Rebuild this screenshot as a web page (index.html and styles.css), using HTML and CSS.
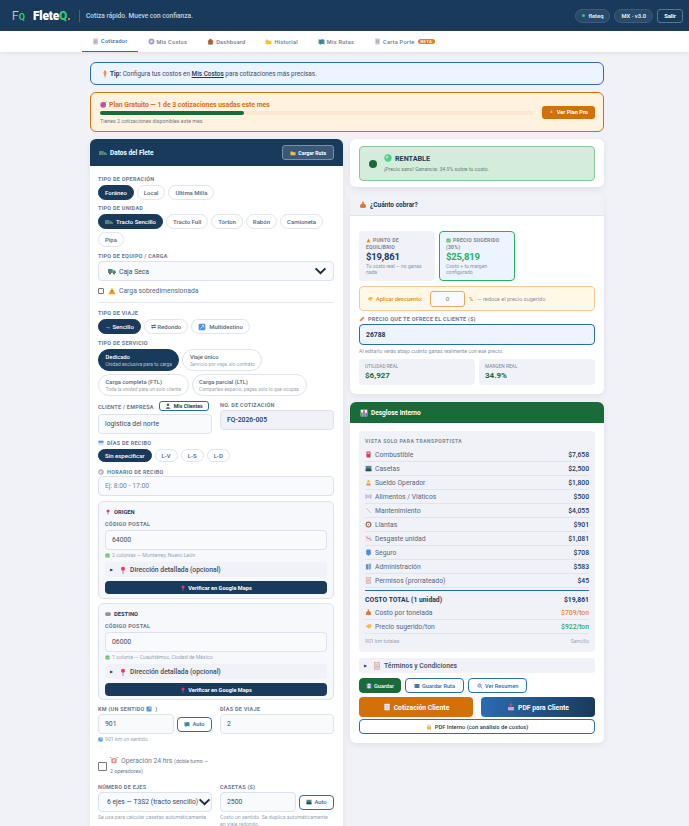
FILE: index.html
```html
<!DOCTYPE html>
<html lang="es">
<head>
  <meta charset="UTF-8" />
  <meta name="viewport" content="width=device-width, initial-scale=1.0" />
  <title>FleteQ</title>
  <link rel="stylesheet" href="styles.css">
</head>
<body>
  <svg class="sprite" xmlns="http://www.w3.org/2000/svg">
    <symbol id="truck" viewBox="0 0 12 12"><rect x="0" y="3" width="7" height="6" fill="#5f7f86"/><path d="M7 5h3l2 2v2H7z" fill="#3c9a6c"/><circle cx="3" cy="10" r="1.2" fill="#333"/><circle cx="9" cy="10" r="1.2" fill="#333"/></symbol>
    <symbol id="doc" viewBox="0 0 12 12"><rect x="2" y="1" width="8" height="10" rx="1" fill="#d8c8d8"/><path d="M3.5 4h5M3.5 6h5M3.5 8h5" stroke="#a28aa0" stroke-width=".8"/></symbol>
    <symbol id="coin" viewBox="0 0 12 12"><circle cx="6" cy="6" r="5" fill="#a49ac8"/><circle cx="6" cy="6" r="2.2" fill="#e6e2f2"/></symbol>
    <symbol id="house" viewBox="0 0 12 12"><path d="M6 1l5.5 5H10v5H2V6H.5z" fill="#b5563a"/><rect x="5" y="7" width="2.4" height="4" fill="#5d8a5a"/></symbol>
    <symbol id="folder" viewBox="0 0 12 12"><path d="M1 3h4l1 1.500h5V10.500H1z" fill="#f4c040"/></symbol>
    <symbol id="map" viewBox="0 0 12 12"><path d="M1 2l3.300 1 3.400-1L11 3v8l-3.300-1-3.400 1L1 10z" fill="#3f93a8"/><path d="M4.300 3v8M7.700 2v8" stroke="#2a6a72" stroke-width=".7"/></symbol>
    <symbol id="pin" viewBox="0 0 12 12"><circle cx="6" cy="4" r="3" fill="#e8386a"/><path d="M6 6v6" stroke="#9a7080" stroke-width="1.2"/></symbol>
    <symbol id="tip" viewBox="0 0 12 12"><path d="M6 0c2 2 2.500 3 2 5L6 12 4 5c-.5-2 0-3 2-5z" fill="#f08a4a"/><path d="M3 5h6" stroke="#f6b48a"/></symbol>
    <symbol id="target" viewBox="0 0 12 12"><circle cx="5.500" cy="6.500" r="5" fill="#d84f8a"/><circle cx="5.500" cy="6.500" r="2.4" fill="#9a5fc0"/><path d="M6 6l5-5" stroke="#3d7ac8" stroke-width="1.4"/></symbol>
    <symbol id="rocket" viewBox="0 0 12 12"><path d="M6 0c2 2 2.500 5 1.500 8h-3C3.500 5 4 2 6 0z" fill="#f6b6a0"/><path d="M4.500 8h3L6 12z" fill="#e5443a"/></symbol>
    <symbol id="warn" viewBox="0 0 12 12"><path d="M6 1l5.500 10H.5z" fill="#f4a41e"/><path d="M6 4.500v3.500" stroke="#6a4a10"/></symbol>
    <symbol id="cal" viewBox="0 0 12 12"><rect x="1" y="1.500" width="10" height="9.5" fill="#d8def8"/><rect x="1" y="1.500" width="10" height="4" fill="#5a8fdc"/></symbol>
    <symbol id="clock" viewBox="0 0 12 12"><circle cx="6" cy="6" r="4.5" fill="#fff" stroke="#75657a" stroke-width="1.5"/><path d="M6 3.500V6l2 1.500" stroke="#75657a" fill="none"/></symbol>
    <symbol id="user" viewBox="0 0 12 12"><circle cx="6" cy="3.500" r="2.5" fill="#5b3e80"/><path d="M1.500 11.500c0-4 9-4 9 0z" fill="#5b3e80"/></symbol>
    <symbol id="flag" viewBox="0 0 12 12"><rect x="1" y="3" width="10" height="6.5" fill="#6a6a7a"/><path d="M1 3l10 6.500M11 3L1 9.500" stroke="#d8d8de" stroke-width=".9"/></symbol>
    <symbol id="check" viewBox="0 0 12 12"><rect x="1" y="1" width="10" height="10" rx="1.5" fill="#62c06c"/><path d="M3 6l2.200 2.500L9 3.500" stroke="#e8f8e8" fill="none" stroke-width="1.2"/></symbol>
    <symbol id="arrow" viewBox="0 0 12 12"><rect x="1" y="1" width="10" height="10" rx="1.5" fill="#4a92e6"/><path d="M3.500 8.500l5-5M5.500 3.500h3v3" stroke="#fff" fill="none"/></symbol>
    <symbol id="alarm" viewBox="0 0 12 12"><rect x="2" y="3.500" width="8" height="7.5" rx="1.5" fill="#ec8a8a"/><path d="M2 3L0.500 1.500M10 3l1.500-1.500" stroke="#e0555a" stroke-width="1.5"/><circle cx="6" cy="7" r="2" fill="#fbe0e0"/></symbol>
    <symbol id="toll" viewBox="0 0 12 12"><rect x="1" y="1.500" width="10" height="9" fill="#4f8d9c"/><path d="M1 8l3-3 2 2 2-2 3 3v2.500H1z" fill="#30524a"/></symbol>
    <symbol id="bag" viewBox="0 0 12 12"><path d="M4.500 1h3L7 3.500c2.500 1 4 3.500 3.500 5.500-.5 2-8.500 2-9 0C1 7 2.500 4.500 5 3.500z" fill="#d87a38"/></symbol>
    <symbol id="pen" viewBox="0 0 12 12"><path d="M1 11l1-3.500L8.500 1 11 3.500 4.500 10z" fill="#ee7a52"/><path d="M8 2l2.500 2.500" stroke="#f4c4a8"/></symbol>
    <symbol id="bars" viewBox="0 0 12 12"><rect x="1" y="1" width="10" height="10" fill="#eef0ee"/><rect x="1.500" y="5" width="2.5" height="6" fill="#4ab06a"/><rect x="4.700" y="2" width="2.5" height="9" fill="#d04a88"/><rect x="8" y="6" width="2.5" height="5" fill="#4a80d8"/></symbol>
    <symbol id="fuel" viewBox="0 0 12 12"><rect x="2.500" y="1" width="7" height="10" rx="1" fill="#d83a52"/><rect x="4" y="2.500" width="4" height="2.5" fill="#f6c8d0"/></symbol>
    <symbol id="worker" viewBox="0 0 12 12"><path d="M4.500 1.500h3l1 5h-5z" fill="#f4bf4c"/><path d="M2.500 11V7.500h7V11z" fill="#f08a3a"/></symbol>
    <symbol id="food" viewBox="0 0 12 12"><rect x="1" y="2" width="1.8" height="8" fill="#b4a2d4"/><rect x="9.200" y="2" width="1.8" height="8" fill="#b4a2d4"/><rect x="3.600" y="3.500" width="4.8" height="5" fill="#ccc0e4"/></symbol>
    <symbol id="wrench" viewBox="0 0 12 12"><path d="M2 2l8 8" stroke="#b4b8c4" stroke-width="1.4"/></symbol>
    <symbol id="tire" viewBox="0 0 12 12"><circle cx="6" cy="6" r="4" fill="none" stroke="#a0705a" stroke-width="2.2"/><circle cx="6" cy="6" r="1" fill="#a0705a"/></symbol>
    <symbol id="down" viewBox="0 0 12 12"><rect x="1" y="1" width="10" height="10" fill="#ece4ec"/><path d="M1.500 3L6 6l2 0 3 4" stroke="#d8487a" fill="none" stroke-width="1.2"/></symbol>
    <symbol id="shield" viewBox="0 0 12 12"><path d="M3 1h6l1 2v6l-4 2.500L2 9V3z" fill="#4f8fdc"/></symbol>
    <symbol id="build" viewBox="0 0 12 12"><rect x="1.500" y="2" width="4.5" height="9" fill="#6a90b8"/><rect x="6.500" y="1" width="4" height="10" fill="#8aaad0"/></symbol>
    <symbol id="list" viewBox="0 0 12 12"><rect x="2" y="1" width="8" height="10" fill="#f0d8d8" stroke="#c89a9a" stroke-width=".8"/><path d="M3.500 4.500h5M3.500 6.500h5M3.500 8.500h5" stroke="#b8a0a0" stroke-width=".7"/></symbol>
    <symbol id="tag" viewBox="0 0 12 12"><path d="M1 6l5-4h5v4l-4 4z" fill="#f6b84a"/></symbol>
    <symbol id="save" viewBox="0 0 12 12"><rect x="1.500" y="1.500" width="9" height="9" fill="#a88ad8"/><rect x="3.500" y="1.500" width="5" height="3" fill="#f4eefc"/><rect x="3.500" y="6.500" width="5" height="4" fill="#e8e0f8"/></symbol>
    <symbol id="mapblue" viewBox="0 0 12 12"><rect x="1" y="2" width="10" height="8" fill="#4f83b8"/><path d="M4.300 2v8M7.700 2v8" stroke="#234f80" stroke-width=".8"/></symbol>
    <symbol id="search" viewBox="0 0 12 12"><circle cx="5" cy="5" r="3.3" fill="#bcd4f0" stroke="#7a5a9a" stroke-width="1.2"/><path d="M7.500 7.500l3.500 3.500" stroke="#8a6a3a" stroke-width="1.5"/></symbol>
    <symbol id="page" viewBox="0 0 12 12"><rect x="2" y="1" width="8" height="10" rx="1" fill="#f0e8ee"/><path d="M3.500 4h5M3.500 6h5M3.500 8h5" stroke="#c8b0c4" stroke-width=".8"/></symbol>
    <symbol id="outbox" viewBox="0 0 12 12"><rect x="1.500" y="6" width="9" height="5" fill="#c8a8d8"/><path d="M6 1v6" stroke="#e85070" stroke-width="1.5"/><path d="M3.500 3.500L6 1l2.500 2.500" stroke="#e85070" fill="none"/></symbol>
    <symbol id="lock" viewBox="0 0 12 12"><rect x="2" y="5" width="8" height="6" rx="1" fill="#f0b83a"/><path d="M3.800 5V3.500a2.200 2.200 0 0 1 4.400 0V5" stroke="#a8a0a0" fill="none" stroke-width="1.1"/></symbol>
    <symbol id="ball" viewBox="0 0 12 12"><circle cx="6" cy="6" r="5.5" fill="#52cf8c"/><circle cx="4.500" cy="4.500" r="2" fill="#a4ecc4"/></symbol>
    <symbol id="chev" viewBox="0 0 14 9"><path d="M1.500 1.500L7 7l5.500-5.500" fill="none" stroke="#1a2a3a" stroke-width="2.2"/></symbol>
  </svg>

  <header class="topbar">
    <div class="brand">
      <span class="logo-mark">F<b>Q</b></span>
      <span class="logo-text">Flete<b>Q</b><i></i></span>
      <span class="tagline">Cotiza rápido. Mueve con confianza.</span>
    </div>
    <div class="top-right">
      <span class="pill"><i class="online"></i>fleteq</span>
      <span class="pill">MX · v3.0</span>
      <button class="logout">Salir</button>
    </div>
  </header>

  <nav class="tabs">
    <a class="tab active"><svg class="ic"><use href="#doc"/></svg>Cotizador</a>
    <a class="tab"><svg class="ic"><use href="#coin"/></svg>Mis Costos</a>
    <a class="tab"><svg class="ic"><use href="#house"/></svg>Dashboard</a>
    <a class="tab"><svg class="ic"><use href="#folder"/></svg>Historial</a>
    <a class="tab"><svg class="ic"><use href="#map"/></svg>Mis Rutas</a>
    <a class="tab"><svg class="ic"><use href="#doc"/></svg>Carta Porte <span class="beta">BETA</span></a>
  </nav>

  <main class="wrap">
    <div class="tip"><svg class="ic"><use href="#tip"/></svg><span><b>Tip:</b> Configura tus costos en <a>Mis Costos</a> para cotizaciones más precisas.</span></div>

    <div class="plan">
      <div class="plan-info">
        <div class="plan-title"><svg class="ic"><use href="#target"/></svg>Plan Gratuito — 1 de 3 cotizaciones usadas este mes</div>
        <div class="meter"><div class="meter-fill"></div></div>
        <div class="plan-note">Tienes 2 cotizaciones disponibles este mes.</div>
      </div>
      <button class="btn-pro"><svg class="ic"><use href="#rocket"/></svg>Ver Plan Pro</button>
    </div>

    <div class="columns">
      <section class="card left">
        <div class="card-head navy">
          <span class="head-title"><svg class="ic"><use href="#truck"/></svg>Datos del Flete</span>
          <button class="btn-head"><svg class="ic"><use href="#folder"/></svg>Cargar Ruta</button>
        </div>
        <div class="card-body">
          <div class="lbl">Tipo de operación</div>
          <div class="chips tight">
            <span class="chip on">Foráneo</span><span class="chip">Local</span><span class="chip">Última Milla</span>
          </div>
          <div class="lbl">Tipo de unidad</div>
          <div class="chips">
            <span class="chip on"><svg class="ic"><use href="#truck"/></svg>Tracto Sencillo</span><span class="chip">Tracto Full</span><span class="chip">Tórton</span><span class="chip">Rabón</span><span class="chip">Camioneta</span><span class="chip">Pipa</span>
          </div>
          <div class="lbl">Tipo de equipo / carga</div>
          <div class="field select select-wide"><span><svg class="ic"><use href="#truck"/></svg>Caja Seca</span><svg class="chev"><use href="#chev"/></svg></div>
          <label class="check-row"><span class="box"></span><svg class="ic"><use href="#warn"/></svg>Carga sobredimensionada</label>
          <hr class="sep">

          <div class="lbl">Tipo de viaje</div>
          <div class="chips">
            <span class="chip on">→ Sencillo</span><span class="chip">⇄ Redondo</span><span class="chip"><svg class="ic"><use href="#arrow"/></svg>Multidestino</span>
          </div>
          <div class="lbl">Tipo de servicio</div>
          <div class="chips services">
            <span class="svc on"><b>Dedicado</b><small>Unidad exclusiva para tu carga</small></span>
            <span class="svc"><b>Viaje único</b><small>Servicio por viaje, sin contrato</small></span>
            <span class="svc"><b>Carga completa (FTL)</b><small>Toda la unidad para un solo cliente</small></span>
            <span class="svc"><b>Carga parcial (LTL)</b><small>Compartes espacio, pagas solo lo que ocupas</small></span>
          </div>
          <div class="two client-row">
            <div>
              <div class="lbl-row"><span class="lbl">Cliente / Empresa</span><button class="btn-mini"><svg class="ic"><use href="#user"/></svg>Mis Clientes</button></div>
              <div class="field">logistica del norte</div>
            </div>
            <div>
              <div class="lbl">No. de cotización</div>
              <div class="field readonly">FQ-2026-005</div>
            </div>
          </div>
          <div class="lbl"><svg class="ic"><use href="#cal"/></svg>Días de recibo</div>
          <div class="chips small-chips">
            <span class="chip on">Sin especificar</span><span class="chip">L-V</span><span class="chip">L-S</span><span class="chip">L-D</span>
          </div>
          <div class="lbl"><svg class="ic"><use href="#clock"/></svg>Horario de recibo</div>
          <div class="field muted">Ej: 8:00 - 17:00</div>

          <div class="place">
            <div class="place-title"><svg class="ic"><use href="#pin"/></svg>Origen</div>
            <div class="lbl">Código postal</div>
            <div class="field">64000</div>
            <div class="hint"><svg class="ic"><use href="#check"/></svg>2 colonias — Monterrey, Nuevo León</div>
            <div class="more"><span class="caret">▶</span><svg class="ic"><use href="#pin"/></svg>Dirección detallada (opcional)</div>
            <button class="btn-maps"><svg class="ic"><use href="#pin"/></svg>Verificar en Google Maps</button>
          </div>
          <div class="place">
            <div class="place-title"><svg class="ic"><use href="#flag"/></svg>Destino</div>
            <div class="lbl">Código postal</div>
            <div class="field">06000</div>
            <div class="hint"><svg class="ic"><use href="#check"/></svg>1 colonia — Cuauhtémoc, Ciudad de México</div>
            <div class="more"><span class="caret">▶</span><svg class="ic"><use href="#pin"/></svg>Dirección detallada (opcional)</div>
            <button class="btn-maps"><svg class="ic"><use href="#pin"/></svg>Verificar en Google Maps</button>
          </div>

          <div class="two km-row">
            <div>
              <div class="lbl">KM (un sentido <svg class="ic"><use href="#arrow"/></svg>)</div>
              <div class="with-btn">
                <div class="field">901</div>
                <button class="btn-auto"><svg class="ic"><use href="#map"/></svg>Auto</button>
              </div>
              <div class="hint"><svg class="ic"><use href="#arrow"/></svg>901 km un sentido</div>
            </div>
            <div>
              <div class="lbl">Días de viaje</div>
              <div class="field">2</div>
            </div>
          </div>

          <div class="two op-row">
            <label class="op24">
              <span class="box big"></span>
              <span class="op-text">
                <span class="op-line"><svg class="ic"><use href="#alarm"/></svg>Operación 24 hrs <small>(doble turno —</small></span>
                <small class="op-line">2 operadores)</small>
              </span>
            </label>
          </div>

          <div class="two axle-row">
            <div>
              <div class="lbl">Número de ejes</div>
              <div class="field select"><span>6 ejes — T3S2 (tracto sencillo)</span><svg class="chev"><use href="#chev"/></svg></div>
              <div class="hint">Se usa para calcular casetas automáticamente</div>
            </div>
            <div>
              <div class="lbl">Casetas ($)</div>
              <div class="with-btn">
                <div class="field">2500</div>
                <button class="btn-auto"><svg class="ic"><use href="#toll"/></svg>Auto</button>
              </div>
              <div class="hint">Costo un sentido. Se duplica automáticamente en viaje redondo.</div>
            </div>
          </div>
        </div>
      </section>

      <div class="right">
        <section class="card pad-card">
          <div class="status">
            <i class="status-dot"></i>
            <div>
              <div class="status-title"><svg class="ic"><use href="#ball"/></svg>RENTABLE</div>
              <div class="status-note">¡Precio sano! Ganancia: 34.9% sobre tu costo.</div>
            </div>
          </div>
        </section>

        <section class="card">
          <div class="card-head plain"><svg class="ic"><use href="#bag"/></svg>¿Cuánto cobrar?</div>
          <div class="card-body price-body">
            <div class="price-grid">
              <div class="price-box">
                <div class="lbl"><svg class="ic"><use href="#warn"/></svg>Punto de equilibrio</div>
                <div class="price">$19,861</div>
                <div class="price-note">Tu costo real — no ganas nada</div>
              </div>
              <div class="price-box best">
                <div class="lbl"><svg class="ic"><use href="#check"/></svg>Precio sugerido (30%)</div>
                <div class="price">$25,819</div>
                <div class="price-note">Costo + tu margen configurado</div>
              </div>
            </div>
            <div class="discount">
              <span class="disc-label"><svg class="ic"><use href="#tag"/></svg>Aplicar descuento:</span>
              <span class="disc-input">0</span>
              <span class="disc-pct">%</span>
              <span class="disc-note">— reduce el precio sugerido</span>
            </div>
            <div class="lbl offer-lbl"><svg class="ic"><use href="#pen"/></svg>Precio que te ofrece el cliente ($)</div>
            <div class="field offer">26788</div>
            <div class="offer-note">Al editarlo verás abajo cuánto ganas realmente con ese precio.</div>
            <div class="real-grid">
              <div class="real-box"><span>Utilidad real</span><b>$6,927</b></div>
              <div class="real-box"><span>Margen real</span><b>34.9%</b></div>
            </div>
          </div>
        </section>

        <section class="card">
          <div class="card-head green"><svg class="ic"><use href="#bars"/></svg>Desglose Interno</div>
          <div class="card-body break-body">
            <div class="breakdown">
              <div class="break-title">Vista solo para transportista</div>
              <div class="row"><span><svg class="ic"><use href="#fuel"/></svg>Combustible</span><b>$7,658</b></div>
              <div class="row"><span><svg class="ic"><use href="#toll"/></svg>Casetas</span><b>$2,500</b></div>
              <div class="row"><span><svg class="ic"><use href="#worker"/></svg>Sueldo Operador</span><b>$1,800</b></div>
              <div class="row"><span><svg class="ic"><use href="#food"/></svg>Alimentos / Viáticos</span><b>$500</b></div>
              <div class="row"><span><svg class="ic"><use href="#wrench"/></svg>Mantenimiento</span><b>$4,055</b></div>
              <div class="row"><span><svg class="ic"><use href="#tire"/></svg>Llantas</span><b>$901</b></div>
              <div class="row"><span><svg class="ic"><use href="#down"/></svg>Desgaste unidad</span><b>$1,081</b></div>
              <div class="row"><span><svg class="ic"><use href="#shield"/></svg>Seguro</span><b>$708</b></div>
              <div class="row"><span><svg class="ic"><use href="#build"/></svg>Administración</span><b>$583</b></div>
              <div class="row"><span><svg class="ic"><use href="#list"/></svg>Permisos (prorrateado)</span><b>$45</b></div>
              <div class="row total"><span>COSTO TOTAL (1 unidad)</span><b>$19,861</b></div>
              <div class="row"><span><svg class="ic"><use href="#bag"/></svg>Costo por tonelada</span><b class="t-orange">$709/ton</b></div>
              <div class="row"><span><svg class="ic"><use href="#tag"/></svg>Precio sugerido/ton</span><b class="t-green">$922/ton</b></div>
              <div class="row foot"><span>901 km totales</span><span>Sencillo</span></div>
            </div>
            <div class="more terms"><span class="caret">▶</span><svg class="ic"><use href="#list"/></svg>Términos y Condiciones</div>
            <div class="actions">
              <button class="btn btn-green"><svg class="ic"><use href="#save"/></svg>Guardar</button>
              <button class="btn btn-line"><svg class="ic"><use href="#mapblue"/></svg>Guardar Ruta</button>
              <button class="btn btn-line"><svg class="ic"><use href="#search"/></svg>Ver Resumen</button>
            </div>
            <div class="big-actions">
              <button class="btn-big orange"><svg class="ic"><use href="#page"/></svg>Cotización Cliente</button>
              <button class="btn-big blue"><svg class="ic"><use href="#outbox"/></svg>PDF para Cliente</button>
            </div>
            <button class="btn-wide"><svg class="ic"><use href="#lock"/></svg>PDF Interno (con análisis de costos)</button>
          </div>
        </section>
      </div>
    </div>
  </main>
</body>
</html>
```

FILE: styles.css
```css
* {
  box-sizing: border-box;
}
html, body {
  height: 100vh;
  overflow: hidden;
}
body {
  margin: 0;
  background: #f0f2f7;
  color: #1a3a5c;
  font-family: Roboto, "Open Sans", sans-serif;
  font-size: 7px;
}
button {
  font-family: inherit;
  cursor: pointer;
}
.sprite {
  display: none;
}
.ic {
  width: 8px;
  height: 8px;
  flex: none;
  display: inline-block;
  vertical-align: -1px;
  margin-right: 3px;
}

/* header */
.topbar {
  height: 31px;
  background: #1a3a5c;
  display: flex;
  justify-content: space-between;
  align-items: center;
  padding: 0 6px 0 12px;
  color: #fff;
}
.brand {
  display: flex;
  align-items: center;
}
.logo-mark {
  width: 21px;
  font-size: 12px;
  font-weight: 300;
  color: #e8eef5;
  letter-spacing: -1px;
}
.logo-mark b {
  color: #2ecc71;
  font-size: 9px;
  font-weight: 700;
  margin-left: 1px;
}
.logo-text {
  font-size: 12px;
  font-weight: 900;
  letter-spacing: -.2px;
  width: 46px;
}
.logo-text b {
  color: #2ecc71;
}
.logo-text i {
  display: inline-block;
  width: 2px;
  height: 2px;
  background: #e67e22;
  margin-left: 1px;
}
.tagline {
  border-left: 1px solid #46627f;
  padding: 2px 0 2px 6px;
  color: #c5d3e2;
  font-size: 6.6px;
  font-weight: 500;
}
.top-right {
  display: flex;
  align-items: center;
  gap: 4px;
}
.pill {
  height: 14px;
  padding: 0 6px;
  border: 1px solid #3f5c7b;
  border-radius: 7px;
  background: #2a4a6b;
  color: #dfe7ef;
  font-size: 5.8px;
  font-weight: 700;
  display: flex;
  align-items: center;
}
.online {
  width: 3px;
  height: 3px;
  border-radius: 50%;
  background: #2ecc71;
  margin-right: 3px;
}
.logout {
  height: 14px;
  padding: 0 6px;
  background: transparent;
  border: 1px solid #5a7590;
  border-radius: 3px;
  color: #fff;
  font-size: 5.8px;
  font-weight: 700;
}

/* tabs */
.tabs {
  height: 21px;
  background: #fff;
  padding-left: 82px;
  display: flex;
  box-shadow: 0 1px 4px rgba(0,0,0,0.08);
}
.tab {
  height: 21px;
  padding: 0 10px;
  display: flex;
  align-items: center;
  color: #6b7a90;
  font-size: 5.6px;
  font-weight: 500;
  letter-spacing: .25px;
  white-space: nowrap;
}
.tab .ic {
  width: 7px;
  height: 7px;
  margin-right: 2px;
}
.tab.active {
  color: #2b6cb0;
  border-bottom: 1px solid #2b6cb0;
}
.beta {
  background: #e67e22;
  color: #fff;
  font-size: 4.4px;
  border-radius: 4px;
  padding: 0 3px;
  margin-left: 3px;
}

/* page body */
.wrap {
  width: 514px;
  margin: 10px 0 0 90px;
}
.tip {
  height: 23px;
  display: flex;
  align-items: center;
  padding-left: 10px;
  background: #ebf4ff;
  border: 1px solid #2b6cb0;
  border-radius: 6px;
  color: #3d4d60;
  font-size: 6.4px;
}
.tip .ic {
  margin-right: 1px;
}
.tip b {
  color: #1a3a5c;
}
.tip a {
  color: #1a3a5c;
  font-weight: 500;
  text-decoration: underline;
}
.plan {
  height: 40px;
  margin-top: 7px;
  padding: 0 8px 0 9px;
  display: flex;
  align-items: center;
  gap: 8px;
  background: #fff3e0;
  border: 1px solid #d4700a;
  border-radius: 6px;
}
.plan-info {
  flex: 1;
}
.plan-title {
  color: #d4700a;
  font-size: 6.8px;
  font-weight: 700;
  line-height: 10px;
}
.plan-title .ic {
  margin-right: 2px;
  width: 7px;
  height: 7px;
}
.meter {
  height: 4px;
  margin: 1px 0 3px;
  background: #fde8d0;
  border-radius: 2px;
}
.meter-fill {
  width: 33.3%;
  height: 100%;
  background: #1a6b3a;
  border-radius: 2px;
}
.plan-note {
  color: #778;
  font-size: 5.3px;
}
.btn-pro {
  height: 13px;
  padding: 0 7px;
  background: #d4700a;
  border: none;
  border-radius: 3px;
  color: #fff;
  font-size: 5.6px;
  font-weight: 700;
  white-space: nowrap;
}
.btn-pro .ic {
  width: 5px;
  height: 5px;
}
.columns {
  margin-top: 7px;
  display: grid;
  grid-template-columns: 253px 254px;
  gap: 7px;
  align-items: start;
}
.card {
  background: #fff;
  border-radius: 6px;
  box-shadow: 0 2px 6px rgba(20,40,80,0.08);
  overflow: hidden;
}
.right {
  display: flex;
  flex-direction: column;
  gap: 8px;
}
.card-head {
  display: flex;
  align-items: center;
  font-weight: 700;
}
.card-head.navy {
  height: 27px;
  background: #1a3a5c;
  color: #fff;
  padding: 0 9px;
  justify-content: space-between;
  font-size: 6.5px;
}
.head-title {
  display: flex;
  align-items: center;
}
.btn-head {
  height: 15px;
  padding: 0 7px;
  background: #3a5878;
  border: 1px solid #7a90a6;
  border-radius: 3px;
  color: #fff;
  font-size: 5.2px;
  font-weight: 700;
}
.btn-head .ic {
  width: 6px;
  height: 6px;
  margin-right: 2px;
}
.card-body {
  padding: 9px 9px 9px 8px;
}
.lbl {
  font-size: 5.5px;
  line-height: 8px;
  font-weight: 700;
  color: #6b7a90;
  text-transform: uppercase;
  letter-spacing: .25px;
}
.lbl .ic {
  width: 6px;
  height: 6px;
}
.chips {
  display: flex;
  flex-wrap: wrap;
  gap: 3px;
  margin: 2px 0 5px;
}
.chips.tight {
  margin-bottom: 4px;
}
.chip {
  height: 15px;
  padding: 0 6px;
  background: #fff;
  border: 1px solid #dfe4ee;
  border-radius: 8px;
  color: #57667c;
  font-size: 6px;
  font-weight: 500;
  display: inline-flex;
  align-items: center;
  white-space: nowrap;
}
.chip.on {
  background: #1a3a5c;
  border-color: #1a3a5c;
  color: #fff;
}
.small-chips .chip {
  height: 13px;
}
.field {
  height: 20px;
  background: #f9fafc;
  border: 1px solid #dde2ee;
  border-radius: 4px;
  padding: 0 6px;
  color: #3d4d60;
  font-size: 6.8px;
  display: flex;
  align-items: center;
}
.field.readonly {
  background: #f0f2f7;
  color: #1a3a5c;
  font-weight: 500;
}
.field.muted {
  color: #7a8698;
}
.select {
  justify-content: space-between;
  white-space: nowrap;
}
.select-wide {
  margin-top: 1px;
  padding-left: 9px;
}
.chev {
  width: 13px;
  height: 8px;
  flex: none;
}
.check-row {
  display: flex;
  align-items: center;
  height: 10px;
  margin-top: 5px;
  color: #57667c;
  font-size: 6.8px;
}
.box {
  width: 6px;
  height: 6px;
  background: #fff;
  border: 1px solid #767676;
  border-radius: 1px;
  margin-right: 4px;
}
.box.big {
  width: 9px;
  height: 9px;
  margin-right: 0;
  flex: none;
}
.sep {
  border: none;
  border-top: 1px solid #e4e8f0;
  margin: 6px 0 6px;
}
.services {
  gap: 3px;
}
.svc {
  height: 22px;
  padding: 0 6.5px;
  background: #fff;
  border: 1px solid #dfe4ee;
  border-radius: 11px;
  display: flex;
  flex-direction: column;
  justify-content: center;
  white-space: nowrap;
}
.svc b {
  color: #57667c;
  font-size: 5.8px;
  font-weight: 500;
  line-height: 8px;
}
.svc small {
  color: #9aa5b5;
  font-size: 4.9px;
  line-height: 7px;
}
.svc.on {
  background: #1a3a5c;
  border-color: #1a3a5c;
}
.svc.on b {
  color: #fff;
}
.svc.on small {
  color: #b6c4d4;
}
.two {
  display: grid;
  grid-template-columns: 114px 114px;
  gap: 8px;
}
.client-row {
  margin-bottom: 5px;
}
.lbl-row {
  height: 11px;
  margin-bottom: 2px;
  display: flex;
  align-items: center;
  gap: 5px;
}
.client-row > div + div .lbl {
  margin-bottom: 1px;
}
.btn-mini {
  height: 10px;
  margin-top: -1px;
  padding: 0 5px;
  background: #fff;
  border: 1px solid #2b6cb0;
  border-radius: 3px;
  color: #1a3a5c;
  font-size: 5.2px;
  font-weight: 700;
  white-space: nowrap;
}
.btn-mini .ic {
  width: 6px;
  height: 6px;
}
.small-chips {
  margin-bottom: 6px;
}
.place {
  margin-top: 5px;
  height: 98px;
  background: #f7f8fb;
  border: 1px solid #dde2ee;
  border-radius: 5px;
  padding: 6px 6px 0;
}
.place + .place {
  margin-top: 4px;
  height: 97px;
}
.place-title {
  font-size: 5.8px;
  line-height: 9px;
  font-weight: 700;
  text-transform: uppercase;
  color: #1a3a5c;
}
.place-title .ic {
  width: 6px;
  height: 6px;
}
.place .lbl {
  margin-top: 3px;
  margin-bottom: 2px;
}
.hint {
  font-size: 5.2px;
  line-height: 7px;
  color: #9aa5b5;
  margin-top: 2px;
}
.hint .ic {
  width: 5px;
  height: 5px;
  margin-right: 2px;
}
.more {
  height: 15px;
  margin-top: 3px;
  padding-left: 5px;
  background: #f0f2f7;
  border-radius: 3px;
  display: flex;
  align-items: center;
  color: #3d4d60;
  font-size: 6.8px;
  font-weight: 500;
}
.caret {
  font-size: 4px;
  color: #1a3a5c;
  margin-right: 6px;
}
.btn-maps {
  width: 100%;
  height: 13px;
  margin-top: 4px;
  border: none;
  border-radius: 4px;
  background: #1a3a5c;
  color: #fff;
  font-size: 5.6px;
  font-weight: 700;
}
.btn-maps .ic {
  width: 6px;
  height: 6px;
  margin-right: 2px;
}
.km-row {
  margin-top: 5px;
}
.km-row .lbl, .axle-row .lbl {
  margin-bottom: 1px;
}
.with-btn {
  display: flex;
  align-items: center;
  gap: 3px;
}
.with-btn .field {
  flex: 1;
  min-width: 0;
}
.btn-auto {
  width: 35px;
  height: 15px;
  padding: 0;
  flex: none;
  background: #fff;
  border: 1px solid #2b6cb0;
  border-radius: 4px;
  color: #2b6cb0;
  font-size: 5.8px;
  font-weight: 500;
}
.btn-auto .ic {
  width: 6px;
  height: 6px;
  margin-right: 2px;
}
.op-row {
  margin-top: 13px;
}
.op24 {
  display: flex;
  align-items: center;
  gap: 4px;
  height: 20px;
}
.op-text {
  font-size: 6.8px;
  color: #6b7a90;
  margin-left: -1px;
}
.op-line {
  display: block;
  line-height: 10px;
}
.op-text small {
  font-size: 5.3px;
  color: #6b7a90;
}
.axle-row {
  margin-top: 7px;
}
.axle-row .select {
  padding: 0 5px 0 8px;
}

/* right column */
.pad-card {
  padding: 7px 9px 6px;
}
.status {
  height: 35px;
  padding: 0 9px;
  display: flex;
  align-items: center;
  gap: 7px;
  background: #d4edda;
  border: 1px solid #8cc79c;
  border-radius: 4px;
}
.status-dot {
  width: 8px;
  height: 8px;
  border-radius: 50%;
  background: #1a6b3a;
}
.status-title {
  color: #1a3a5c;
  font-size: 7.2px;
  line-height: 10px;
  font-weight: 700;
}
.status-note {
  margin-top: 1px;
  color: #6b7a80;
  font-size: 5.2px;
  line-height: 8px;
}
.card-head.plain {
  height: 21px;
  padding: 0 9px;
  background: #f0f2f7;
  border-bottom: 1px solid #e0e4ec;
  color: #1a3a5c;
  font-size: 6.5px;
}
.price-body {
  padding: 15px 9px 9px;
}
.price-grid {
  display: grid;
  grid-template-columns: 76px 76px;
  gap: 4px;
}
.price-box {
  height: 50px;
  padding: 6px 7px;
  background: #f0f2f7;
  border-radius: 4px;
}
.price-box.best {
  background: #ebf4ff;
  border: 1px solid #27ae60;
  padding: 5px 6px;
}
.price-box .lbl {
  font-size: 5px;
  line-height: 6.5px;
  color: #7a8698;
}
.price-box .lbl .ic {
  width: 5px;
  height: 5px;
  margin-right: 2px;
}
.price {
  font-size: 9.5px;
  line-height: 13px;
  font-weight: 700;
  letter-spacing: -.2px;
  color: #1a3a5c;
}
.best .price {
  color: #27ae60;
}
.price-note {
  color: #8a94a4;
  font-size: 5px;
  line-height: 6px;
}
.discount {
  height: 25px;
  margin-top: 5px;
  padding-left: 7px;
  display: flex;
  align-items: center;
  background: #fff8e6;
  border: 1px solid #f5c99a;
  border-radius: 4px;
  font-size: 5.6px;
  color: #8a94a4;
}
.disc-label {
  color: #e08a20;
  font-weight: 500;
  width: 63px;
}
.disc-label .ic {
  width: 6px;
  height: 6px;
}
.disc-input {
  width: 35px;
  height: 16px;
  background: #f9fafc;
  border: 1px solid #f0a860;
  border-radius: 3px;
  color: #6b7a90;
  font-size: 6px;
  display: flex;
  align-items: center;
  justify-content: center;
}
.disc-pct {
  color: #e08a20;
  font-weight: 500;
  margin: 0 4px;
}
.offer-lbl {
  margin-top: 4px;
  margin-bottom: 1px;
}
.field.offer {
  height: 21px;
  background: #ebf4ff;
  border: 1px solid #2b6cb0;
  color: #1a3a5c;
  font-weight: 700;
}
.offer-note {
  margin-top: 3px;
  color: #8a94a4;
  font-size: 5.2px;
  line-height: 7px;
}
.real-grid {
  margin-top: 4px;
  display: grid;
  grid-template-columns: 1fr 1fr;
  gap: 4px;
}
.real-box {
  height: 26px;
  padding: 4px 6px;
  background: #f0f2f7;
  border-radius: 4px;
}
.real-box span {
  display: block;
  color: #7a8698;
  font-size: 4.8px;
  line-height: 7px;
  text-transform: uppercase;
}
.real-box b {
  display: block;
  color: #1a6b3a;
  font-size: 8px;
  line-height: 11px;
}
.card-head.green {
  height: 21px;
  padding: 0 10px;
  background: #1a6b3a;
  color: #fff;
  font-size: 6.5px;
}
.break-body {
  padding: 8px 9px 9px;
}
.breakdown {
  height: 221px;
  padding: 6px 6px 0;
  background: #f0f2f7;
  border-radius: 4px;
}
.break-title {
  font-size: 5px;
  font-weight: 700;
  text-transform: uppercase;
  letter-spacing: .5px;
  color: #7a8698;
  line-height: 8px;
  margin-bottom: 3px;
}
.row {
  height: 14px;
  display: flex;
  justify-content: space-between;
  align-items: center;
  border-bottom: 1px solid #e0e4ec;
  color: #57667c;
  font-size: 6.8px;
}
.row b {
  color: #1a3a5c;
  font-weight: 500;
}
.row .ic {
  width: 7px;
  height: 7px;
}
.row.total {
  height: 16px;
  margin-top: 2px;
  padding-top: 2px;
  border-top: 1px solid #2b6cb0;
  border-bottom: none;
  color: #1a3a5c;
  font-weight: 700;
}
.row.total b {
  font-weight: 700;
}
.t-orange {
  color: #e08a3a !important;
}
.t-green {
  color: #27ae60 !important;
}
.row.foot {
  border: none;
  color: #9aa5b5;
  font-size: 5.2px;
}
.terms {
  margin-top: 6px;
}
.actions {
  display: flex;
  gap: 4px;
  margin-top: 5px;
}
.btn {
  height: 15px;
  padding: 0 6px;
  border-radius: 4px;
  font-size: 5.6px;
  font-weight: 500;
  white-space: nowrap;
}
.btn .ic {
  width: 6px;
  height: 6px;
  margin-right: 2px;
}
.btn-green {
  background: #1a6b3a;
  border: 1px solid #1a6b3a;
  color: #fff;
}
.btn-line {
  padding: 0 8px;
  background: #fff;
  border: 1px solid #2b6cb0;
  color: #2b6cb0;
}
.big-actions {
  display: grid;
  grid-template-columns: 114px 114px;
  gap: 8px;
  margin-top: 4px;
}
.btn-big {
  height: 20px;
  border: none;
  border-radius: 4px;
  color: #fff;
  font-size: 6.8px;
  font-weight: 700;
}
.btn-big.orange {
  background: #d4700a;
}
.btn-big.blue {
  background: linear-gradient(90deg, #2b6cb0, #1a3a5c);
}
.btn-wide {
  width: 100%;
  height: 15px;
  margin-top: 2px;
  background: #fff;
  border: 1px solid #2b6cb0;
  border-radius: 4px;
  color: #1a3a5c;
  font-size: 5.8px;
  font-weight: 500;
}
.btn-wide .ic {
  width: 6px;
  height: 6px;
}
```
